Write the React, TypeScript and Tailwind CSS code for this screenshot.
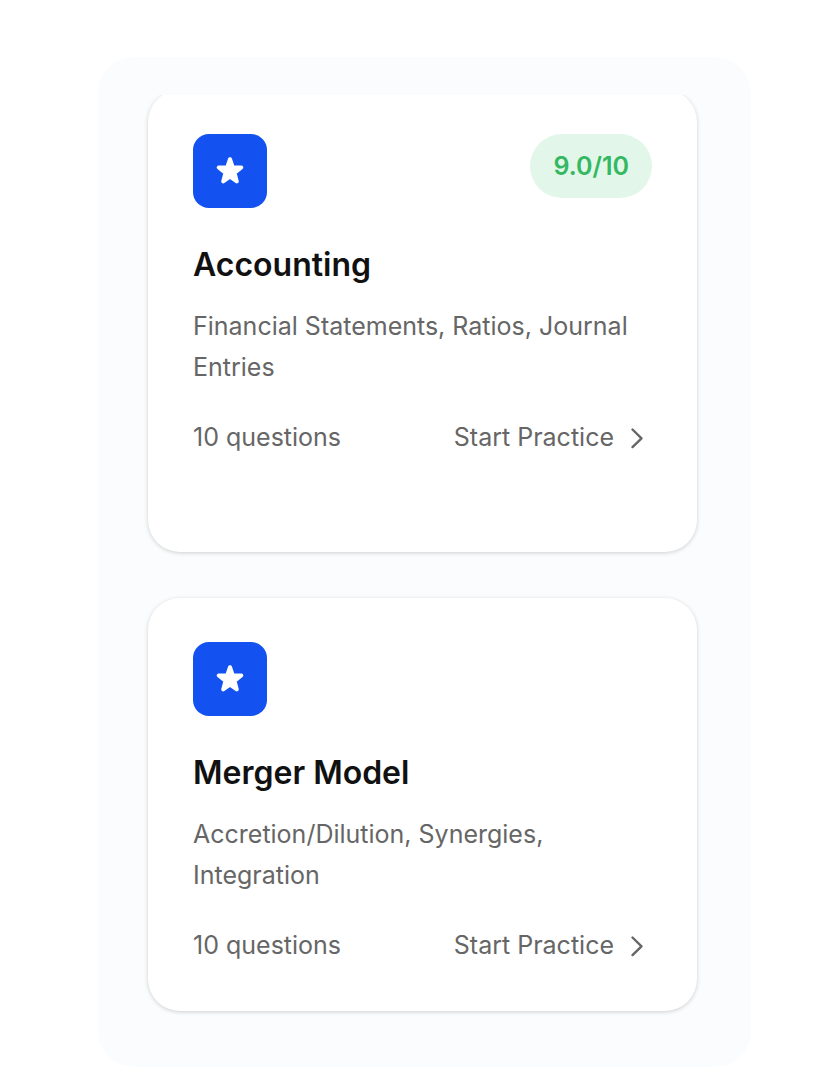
import React from 'react';
import clsx from 'clsx';

type Topic = {
  title: string;
  description: string;
  questions: number;
  score?: string;
};

const topics: Topic[] = [
  {
    title: 'Accounting',
    description: 'Financial Statements, Ratios, Journal Entries',
    questions: 10,
    score: '9.0/10',
  },
  {
    title: 'Merger Model',
    description: 'Accretion/Dilution, Synergies, Integration',
    questions: 10,
  },
];

const StarIcon: React.FC = () => (
  <svg viewBox="0 0 32 32" className="w-8 h-8" fill="currentColor" stroke="currentColor" strokeWidth="4" strokeLinejoin="round" aria-hidden="true">
    <path d="M16 4.2l2.7 8 8.6.3-6.8 5.3 2.3 8.6-6.8-4.8-6.8 4.8 2.3-8.6-6.8-5.3 8.6-.3z" />
  </svg>
);

const ArrowIcon: React.FC = () => (
  <svg viewBox="0 0 30 30" className="w-[30px] h-[30px]" fill="none" stroke="currentColor" strokeWidth="2.4" strokeLinecap="round" strokeLinejoin="round" aria-hidden="true">
    <path d="M10.5 6.5l9 8.8-9 8.8" />
  </svg>
);

const TopicCard: React.FC<{ topic: Topic }> = ({ topic }) => {
  return (
    <article className={clsx('bg-white rounded-[32px] px-[45px] pt-11 shadow-[0_1px_4px_rgba(0,0,0,0.18)]', topic.score ? 'pb-[94px]' : 'pb-[45px]')}>
      <div className="flex items-start justify-between mb-[37px]">
        <div className="w-[74px] h-[74px] rounded-2xl bg-[#1352f1] text-white flex items-center justify-center">
          <StarIcon />
        </div>
        {topic.score && (
          <span className="rounded-full bg-[#e2f7e9] text-[#34b862] text-[25px] leading-8 font-semibold px-[23px] py-4">
            {topic.score}
          </span>
        )}
      </div>
      <h2 className="text-[#111111] text-[32px] leading-10 font-semibold mb-[21px]">{topic.title}</h2>
      <p className="text-[25px] leading-[41px] mb-[29px]">{topic.description}</p>
      <div className="flex items-center justify-between text-[25px] leading-[41px]">
        <span>{topic.questions} questions</span>
        <button type="button" className="flex items-center gap-2 cursor-pointer">
          Start Practice
          <ArrowIcon />
        </button>
      </div>
    </article>
  );
};

const App: React.FC = () => {
  return (
    <main className="bg-white pl-[98px] pr-[86px] pt-[57px] pb-3 font-['Inter',sans-serif] text-[#666666]">
      <section className="bg-[#fafcfd] rounded-[36px] pt-[38px] pb-11 pl-[38px] pr-[42px]">
        {/* scroll area, cuts the top edge of the first card */}
        <div className="overflow-hidden px-3 pb-3">
          <div className="-mt-[5px] flex flex-col gap-[46px]">
            {topics.map((topic) => (
              <TopicCard key={topic.title} topic={topic} />
            ))}
          </div>
        </div>
      </section>
    </main>
  );
};

export default App;
